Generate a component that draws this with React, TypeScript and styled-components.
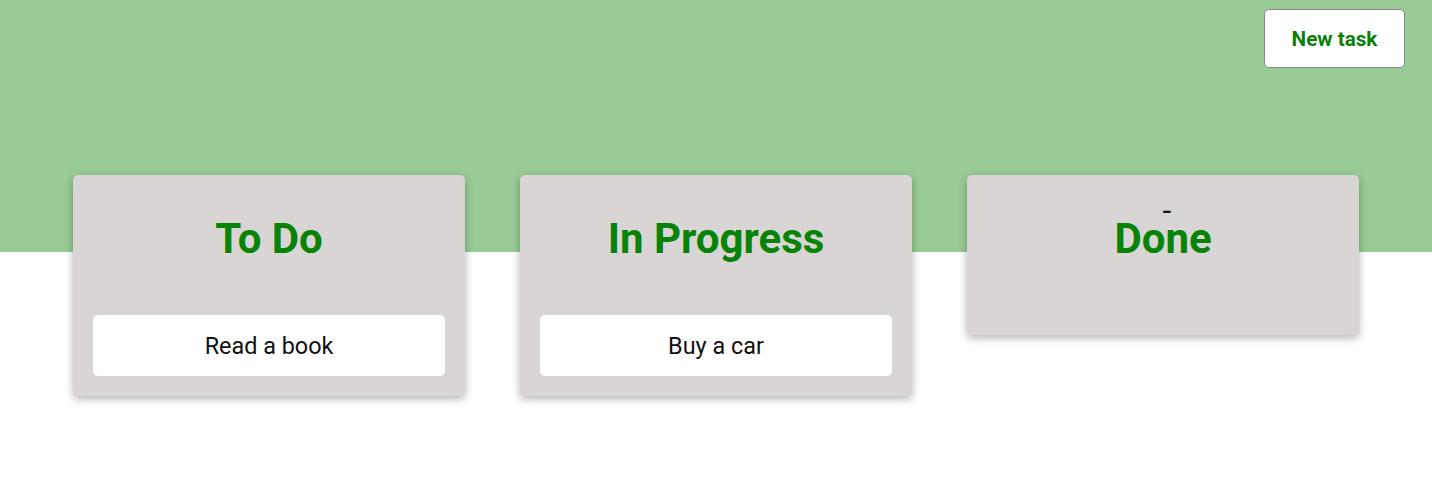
import React from "react";
import styled, { createGlobalStyle } from "styled-components";

const Global = createGlobalStyle`
  html, body { margin: 0; padding: 0; }
  body {
    font-family: Roboto, "Noto Sans", "Liberation Sans", sans-serif;
    background: #ffffff;
  }
`;

const Page = styled.div`
  min-height: 495px;
  background: linear-gradient(#98cb95 0, #98cb95 252px, #ffffff 252px);
  display: flex;
  flex-direction: column;
`;

const TopBar = styled.div`
  display: flex;
  justify-content: flex-end;
  padding: 9px 27px 0 0;
`;

const NewTaskButton = styled.button`
  width: 141px;
  height: 59px;
  background: #ffffff;
  border: 1px solid #8a8a8a;
  border-radius: 5px;
  color: #0a7f0a;
  font-family: Roboto, "Liberation Sans", sans-serif;
  font-weight: 700;
  font-size: 20.7px;
  cursor: pointer;
`;

const Board = styled.div`
  display: flex;
  align-items: flex-start;
  gap: 55px;
  padding: 107px 0 0 73px;
`;

const Column = styled.section`
  position: relative;
  width: 392px;
  box-sizing: border-box;
  background: #dad5d5;
  border-radius: 5px;
  box-shadow: 0 3px 8px rgba(0, 0, 0, 0.3);
  padding: 0 20px 20px;
  display: flex;
  flex-direction: column;
`;

const Title = styled.h2`
  margin: 41.5px 0 54.5px;
  font-size: 42px;
  line-height: 44px;
  font-weight: 700;
  text-align: center;
  color: #078307;
`;

const Marker = styled.span`
  position: absolute;
  top: 30.5px;
  left: 8px;
  right: 0;
  text-align: center;
  font-size: 32px;
  line-height: 8px;
  color: #1a1a1a;
`;

const TaskList = styled.div`
  display: flex;
  flex-direction: column;
  gap: 20px;
`;

const TaskCard = styled.div`
  height: 61px;
  background: #ffffff;
  border-radius: 5px;
  display: flex;
  align-items: center;
  justify-content: center;
  font-size: 23.4px;
  color: #111111;
  padding-top: 1px;
  box-sizing: border-box;
`;

const columns = [
  { title: "To Do", tasks: ["Read a book"] },
  { title: "In Progress", tasks: ["Buy a car"] },
  { title: "Done", tasks: [] as string[], marker: "-" },
];

export default function App() {
  return (
    <>
      <Global />
      <Page>
        <TopBar>
          <NewTaskButton>New task</NewTaskButton>
        </TopBar>
        <Board>
          {columns.map((c) => (
            <Column key={c.title}>
              {c.marker && <Marker>{c.marker}</Marker>}
              <Title>{c.title}</Title>
              {c.tasks.length > 0 && (
                <TaskList>
                  {c.tasks.map((t) => (
                    <TaskCard key={t}>{t}</TaskCard>
                  ))}
                </TaskList>
              )}
            </Column>
          ))}
        </Board>
      </Page>
    </>
  );
}
